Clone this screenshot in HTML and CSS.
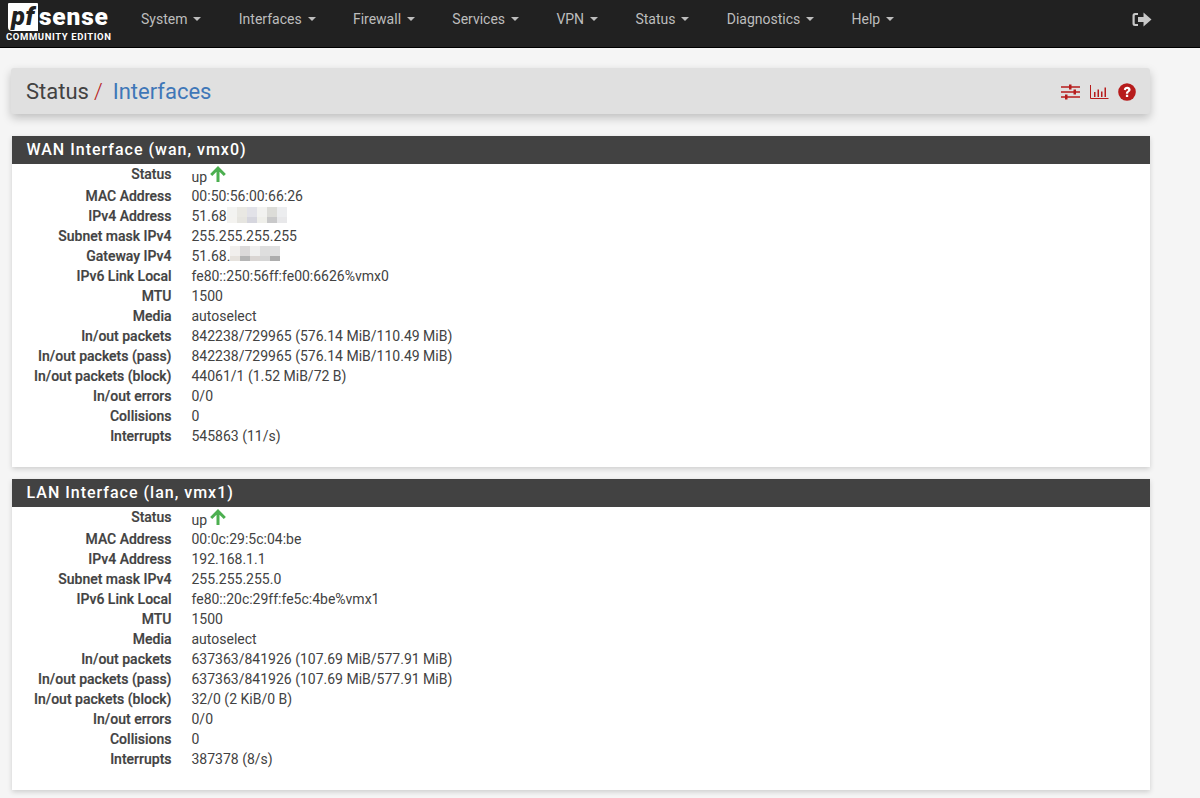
FILE: index.html
```html
<!DOCTYPE html>
<html lang="en">
<head>
<meta charset="utf-8">
<title>Status: Interfaces</title>
<link rel="stylesheet" href="styles.css">
</head>
<body>
<header class="navbar">
  <a class="brand">
    <span class="brand-pf">pf</span><span class="brand-sense">sense</span>
    <span class="brand-ce">COMMUNITY EDITION</span>
  </a>
  <nav class="menu">
    <a>System<i class="caret"></i></a>
    <a>Interfaces<i class="caret"></i></a>
    <a>Firewall<i class="caret"></i></a>
    <a>Services<i class="caret"></i></a>
    <a>VPN<i class="caret"></i></a>
    <a>Status<i class="caret"></i></a>
    <a>Diagnostics<i class="caret"></i></a>
    <a>Help<i class="caret"></i></a>
  </nav>
  <svg class="logout" width="20" height="15" viewBox="0 0 20 15" aria-hidden="true">
    <path d="M6 1H3Q0.500 1 0.500 3.500V11.500Q0.500 14 3 14H6V12H3.500Q2.700 12 2.700 11.200V3.800Q2.700 3 3.500 3H6Z" fill="#c8c8c8"/>
    <path d="M6 5H11.500V0.500L19.500 7.500L11.500 14.500V10H6Z" fill="#c8c8c8"/>
  </svg>
</header>

<main class="page">
  <div class="crumbs">
    <h1><span class="c1">Status</span><span class="sep">/</span><a class="c2">Interfaces</a></h1>
    <div class="tools">
      <svg width="19" height="16" viewBox="0 0 19 16" aria-hidden="true"><path d="M0 2.200H19V3.800H0ZM0 7.200H19V8.800H0ZM0 12.200H19V13.800H0Z" fill="#b71c1c"/><path d="M8 0.500H10.500V5.500H8ZM12.500 5.500H15V10.500H12.500ZM4 10.500H6.500V15.500H4Z" fill="#b71c1c"/></svg>
      <svg width="19" height="16" viewBox="0 0 19 16" aria-hidden="true"><path d="M0.500 1V14.500H18.500" fill="none" stroke="#b71c1c" stroke-width="1"/><path d="M4 8H5.500V13H4ZM7.500 5.500H9V13H7.500ZM11 7.500H12.500V13H11ZM14.500 3.500H16V13H14.500Z" fill="#b71c1c"/></svg>
      <svg width="18" height="18" viewBox="0 0 18 18" aria-hidden="true"><circle cx="9" cy="9" r="8.800" fill="#b71c1c"/><path d="M5.800 6.800C6 4.800 7.400 3.700 9.200 3.700C11.200 3.700 12.600 5 12.600 6.600C12.600 9 10.200 9 10.200 10.800H7.900C7.900 8 10.200 8 10.200 6.800C10.200 6.200 9.800 5.900 9.100 5.900C8.400 5.900 8 6.300 7.900 7.200ZM7.900 11.800H10.200V14H7.900Z" fill="#fff"/></svg>
    </div>
  </div>

  <section class="panel wan">
    <h2>WAN Interface (wan, vmx0)</h2>
    <dl class="rows">
      <dt class="first">Status</dt><dd class="first">up<svg class="up" width="16" height="16" viewBox="0 0 16 16" aria-hidden="true"><path d="M8 16V2.500M1.200 9L8 2.200L14.800 9" fill="none" stroke="#4caf50" stroke-width="3"/></svg></dd>
      <dt>MAC Address</dt><dd>00:50:56:00:66:26</dd>
      <dt>IPv4 Address</dt><dd>51.68<span class="blur b1"></span></dd>
      <dt>Subnet mask IPv4</dt><dd>255.255.255.255</dd>
      <dt>Gateway IPv4</dt><dd>51.68.<span class="blur b2"></span></dd>
      <dt>IPv6 Link Local</dt><dd>fe80::250:56ff:fe00:6626%vmx0</dd>
      <dt>MTU</dt><dd>1500</dd>
      <dt>Media</dt><dd>autoselect</dd>
      <dt>In/out packets</dt><dd>842238/729965 (576.14 MiB/110.49 MiB)</dd>
      <dt>In/out packets (pass)</dt><dd>842238/729965 (576.14 MiB/110.49 MiB)</dd>
      <dt>In/out packets (block)</dt><dd>44061/1 (1.52 MiB/72 B)</dd>
      <dt>In/out errors</dt><dd>0/0</dd>
      <dt>Collisions</dt><dd>0</dd>
      <dt>Interrupts</dt><dd>545863 (11/s)</dd>
    </dl>
  </section>

  <section class="panel lan">
    <h2>LAN Interface (lan, vmx1)</h2>
    <dl class="rows">
      <dt class="first">Status</dt><dd class="first">up<svg class="up" width="16" height="16" viewBox="0 0 16 16" aria-hidden="true"><path d="M8 16V2.500M1.200 9L8 2.200L14.800 9" fill="none" stroke="#4caf50" stroke-width="3"/></svg></dd>
      <dt>MAC Address</dt><dd>00:0c:29:5c:04:be</dd>
      <dt>IPv4 Address</dt><dd>192.168.1.1</dd>
      <dt>Subnet mask IPv4</dt><dd>255.255.255.0</dd>
      <dt>IPv6 Link Local</dt><dd>fe80::20c:29ff:fe5c:4be%vmx1</dd>
      <dt>MTU</dt><dd>1500</dd>
      <dt>Media</dt><dd>autoselect</dd>
      <dt>In/out packets</dt><dd>637363/841926 (107.69 MiB/577.91 MiB)</dd>
      <dt>In/out packets (pass)</dt><dd>637363/841926 (107.69 MiB/577.91 MiB)</dd>
      <dt>In/out packets (block)</dt><dd>32/0 (2 KiB/0 B)</dd>
      <dt>In/out errors</dt><dd>0/0</dd>
      <dt>Collisions</dt><dd>0</dd>
      <dt>Interrupts</dt><dd>387378 (8/s)</dd>
    </dl>
  </section>
</main>
</body>
</html>
```
FILE: styles.css
```css
* { box-sizing: border-box; }
html, body { margin: 0; height: 798px; overflow: hidden; }
body { background: #f5f5f5; font: 14px/20px Roboto, sans-serif; color: #424242; }

.navbar { display: flex; align-items: flex-start; height: 48px; background: #212121; border-bottom: 1px solid #000; position: relative; }
.brand { position: relative; display: block; width: 122.400px; height: 47px; flex: none; color: #fff; }
.brand-pf { position: absolute; left: 8px; top: 3px; width: 30px; height: 28px; background: #fff; color: #212121; font: italic 900 25px/28px Roboto, sans-serif; text-align: center; letter-spacing: 0.5px; border-radius: 1px 1px 0 4px; }
.brand-sense { position: absolute; left: 39px; top: 3px; font: 900 24.500px/28px Roboto, sans-serif; letter-spacing: 0.8px; }
.brand-ce { position: absolute; left: 6px; top: 32px; font: 700 9.500px/10px Roboto, sans-serif; letter-spacing: 0.6px; white-space: nowrap; }
.menu { display: flex; }
.menu a { display: flex; align-items: center; padding: 0 18.650px; color: #bdbdbd; line-height: 38px; white-space: nowrap; }
.caret { display: inline-block; margin-left: 6px; border-top: 4px solid #bdbdbd; border-left: 4px solid transparent; border-right: 4px solid transparent; }
.logout { position: absolute; left: 1132px; top: 12px; }

.page { padding: 20px 50px 0 11px; }
.crumbs { display: flex; align-items: center; justify-content: space-between; height: 46px; background: #e0e0e0; border-radius: 3px; padding: 0 14px 0 15px; box-shadow: 0 4px 10px rgba(0,0,0,.22); margin-bottom: 22px; }
h1 { margin: 0; padding-top: 1px; font-size: 22px; font-weight: 400; line-height: 46px; display: flex; }
.sep { color: #b71c1c; font-weight: 300; margin: 0 10px 0 5px; }
.c2 { color: #3f77b8; }
.tools { display: flex; align-items: center; gap: 9.500px; margin-top: 2px; }

.panel { margin-left: 1px; background: #fff; box-shadow: 0 2px 5px rgba(0,0,0,.16); margin-bottom: 12px; }
h2 { margin: 0; height: 28px; padding: 0 14.500px; background: #424242; color: #fff; font-size: 16px; font-weight: 500; line-height: 28px; letter-spacing: 1px; }
.rows { display: grid; grid-template-columns: 159.500px 1fr; column-gap: 20px; margin: 0; align-content: start; }
.wan .rows { height: 303px; }
.lan .rows { height: 283px; }
dt { font-weight: 500; text-align: right; height: 20px; -webkit-text-stroke: 0.2px #424242; }
dd { margin: 0; height: 20px; display: flex; align-items: center; }
dt.first { height: 22px; }
dd.first { height: 22px; padding-top: 3px; }
.up { margin-left: 3px; margin-top: -5px; flex: none; }
.blur { display: inline-block; flex: none; }
.b1 { width: 60px; height: 16px; margin-bottom: 2px; background:
  linear-gradient(90deg, #f4f3f0 0 10px, #e6e5e0 10px 20px, #d6d6de 20px 30px, #efefea 30px 40px, #c9c9ca 40px 50px, #e8e8ea 50px 60px) 0 100% / 100% 6px no-repeat,
  linear-gradient(90deg, #f3f3f1 0 10px, #e9e8e3 10px 20px, #e2e2e8 20px 30px, #f2f2f0 30px 40px, #dcdcd8 40px 50px, #ecedef 50px 60px); }
.b2 { width: 50px; height: 15px; margin-bottom: 5px; background:
  linear-gradient(90deg, #e6e2dd 0 10px, #b5b5b5 10px 20px, #d9d5d3 20px 30px, #d5d5d5 30px 40px, #adadad 40px 50px) 0 100% / 100% 5px no-repeat,
  linear-gradient(90deg, #f1efed 0 10px, #dcdada 10px 20px, #efefef 20px 30px, #dedede 30px 40px, #e0e0e0 40px 50px); }
```
